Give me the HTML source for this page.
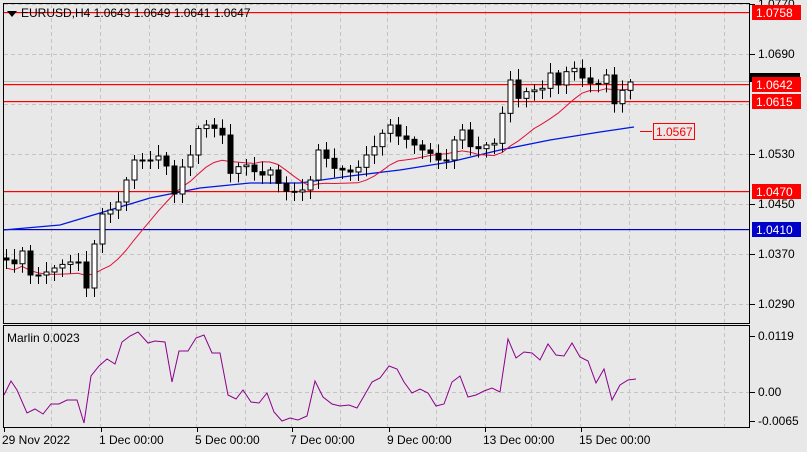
<!DOCTYPE html>
<html><head><meta charset="utf-8"><style>
body{margin:0;background:#e8e8e8;width:807px;height:452px;overflow:hidden;font-family:"Liberation Sans",sans-serif}
svg{position:absolute;left:0;top:0}
text{font-family:"Liberation Sans",sans-serif;font-size:12px}
</style></head><body>
<svg id="s" width="807" height="452" xmlns="http://www.w3.org/2000/svg">
<rect width="807" height="452" fill="#e8e8e8"/>
<g id="grid" stroke="#c4c4c4" stroke-dasharray="4,3" stroke-width="1"></g>
<line x1="3" y1="81.5" x2="750" y2="81.5" stroke="#c0c0c0"/>
<g id="hl"></g>
<polyline id="blue" fill="none" stroke="#0018e0" stroke-width="1.3" points="3,230 60,225 100,213 150,198 200,188 250,183 300,183 350,176 400,170 450,162 500,150 550,140 600,132 634,127"/>
<polyline id="red" fill="none" stroke="#e0103a" stroke-width="1"/>
<g id="c"></g>
<polyline id="ind" fill="none" stroke="#8b008b" stroke-width="1"/>
<rect x="3.5" y="3.5" width="746" height="320" fill="none" stroke="#000"/>
<rect x="3.5" y="325.5" width="746" height="102" fill="none" stroke="#000"/>
<g id="ax"></g>
<polygon points="7,11 17,11 12,17" fill="#000"/>
<text x="21" y="17" font-size="12">EURUSD,H4  1.0643 1.0649 1.0641 1.0647</text>
<text x="7" y="342" font-size="12">Marlin 0.0023</text>
<line x1="640" y1="131.5" x2="652" y2="131.5" stroke="#f00"/>
<rect x="653.5" y="123.5" width="41" height="16" fill="#e8e8e8" stroke="#f00"/>
<text x="656" y="136" fill="#f00" font-size="12">1.0567</text>
</svg>
<script>
var N="http://www.w3.org/2000/svg",S=document.getElementById('s');
function el(p,t,a,tx){var e=document.createElementNS(N,t);for(var k in a)e.setAttribute(k,a[k]);if(tx)e.textContent=tx;document.getElementById(p).appendChild(e);return e;}
var g=[51,100,149,196,245,291,340,387,436,485,531,580,629,675,724];
g.forEach(function(x){el('grid','line',{x1:x+.5,y1:4,x2:x+.5,y2:323});el('grid','line',{x1:x+.5,y1:326,x2:x+.5,y2:427});});
[4,54,104,154,204,254,304].forEach(function(y){el('grid','line',{x1:4,y1:y+.5,x2:749,y2:y+.5});});
el('grid','line',{x1:4,y1:392.5,x2:749,y2:392.5});
[[12,'#ff0000'],[84,'#ff0000'],[101,'#ff0000'],[191,'#ff0000'],[229,'#0000c0']].forEach(function(a){el('hl','rect',{x:4,y:a[0],width:746,height:1.2,fill:a[1]});});
function tick(y,t){el('ax','line',{x1:750,y1:y+.5,x2:755,y2:y+.5,stroke:'#000'});if(t)el('ax','text',{x:758,y:y+4},t);}
tick(4,'1.0770');tick(54,'1.0690');tick(154,'1.0530');tick(204,'1.0450');tick(254,'1.0370');tick(304,'1.0290');
el('ax','rect',{x:750,y:73,width:50,height:9,fill:'#000'});
[[12,'1.0758','#f00'],[84,'1.0642','#f00'],[101,'1.0615','#f00'],[191,'1.0470','#f00'],[229,'1.0410','#0000c8']].forEach(function(a){el('ax','rect',{x:752,y:a[0]-7,width:49,height:15,fill:a[2]});el('ax','text',{x:756,y:a[0]+5,fill:'#fff'},a[1]);});
tick(336,'0.0119');tick(392,'0.00');tick(421,'-0.0065');
[[2,'29 Nov 2022'],[99,'1 Dec 00:00'],[195,'5 Dec 00:00'],[290,'7 Dec 00:00'],[387,'9 Dec 00:00'],[483,'13 Dec 00:00'],[579,'15 Dec 00:00']].forEach(function(a){el('ax','line',{x1:a[0]+2.5,y1:428,x2:a[0]+2.5,y2:432,stroke:'#000'});el('ax','text',{x:a[0],y:444},a[1]);});
var K=[[6,260],[12,270],[20,245],[30,275],[40,275],[50,270],[60,265],[70,262],[80,262],[85,295],[90,260],[95,240],[100,215],[110,210],[120,200],[126,180],[132,160],[140,160],[150,160],[160,155],[165,160],[170,190],[175,195],[180,175],[185,155],[190,155],[196,130],[203,125],[210,125],[216,130],[222,135],[228,175],[234,170],[240,165],[246,165],[252,170],[258,175],[264,175],[270,170],[276,180],[282,190],[288,192],[294,192],[300,190],[306,190],[312,175],[318,150],[324,155],[330,165],[336,170],[342,170],[348,172],[354,172],[360,165],[366,155],[372,150],[378,140],[384,130],[390,125],[396,135],[402,138],[408,140],[414,145],[420,150],[426,150],[432,155],[438,160],[444,165],[450,150],[456,135],[462,130],[468,145],[474,150],[480,148],[486,145],[492,145],[498,140],[504,100],[510,80],[516,100],[522,95],[528,90],[534,90],[540,95],[546,75],[552,72],[558,85],[564,75],[570,65],[576,70],[582,78],[588,75],[594,100],[600,75],[606,75],[612,108],[618,95],[624,88],[630,82],[636,82]];
function at(x){for(var i=1;i<K.length;i++)if(K[i][0]>=x){var a=K[i-1],b=K[i];return a[1]+(b[1]-a[1])*(x-a[0])/(b[0]-a[0]);}return K[K.length-1][1];}
var prev=258,cl=[],xs=[];
for(var x=6;x<=636;x+=8){var c=at(x),o=prev,hi=Math.min(o,c)-3-((x*7)%9),lo=Math.max(o,c)+3+((x*5)%8);
el('c','line',{x1:x+.5,y1:hi,x2:x+.5,y2:lo,stroke:'#000'});
var t=Math.min(o,c),h=Math.max(Math.abs(o-c),1);
el('c','rect',{x:x-2,y:t,width:5,height:h,fill:c<o?'#fff':'#000',stroke:'#000'});
prev=c;cl.push(c);xs.push(x);}
var pts=[];for(var i=0;i<cl.length;i++){var s=0,n=0;for(var j=Math.max(0,i-10);j<=i;j++){s+=cl[j];n++;}pts.push(xs[i]+','+(s/n+8).toFixed(1));}
document.getElementById('red').setAttribute('points',pts.join(' '));
var I=[[4,395],[11,381],[17,390],[27,413],[35,409],[43,414],[51,404],[59,404],[67,400],[77,400],[84,423],[91,376],[99,366],[107,359],[115,364],[122,342],[130,336],[138,332],[148,343],[155,341],[165,342],[172,382],[179,351],[188,351],[196,338],[204,335],[212,353],[220,353],[228,395],[236,399],[243,390],[251,402],[259,403],[267,393],[274,412],[282,421],[290,418],[298,420],[307,416],[315,381],[323,397],[332,404],[340,406],[349,405],[357,408],[364,396],[372,382],[380,378],[389,366],[397,369],[404,382],[412,393],[420,389],[428,393],[436,406],[444,404],[452,382],[460,376],[468,397],[476,395],[484,391],[492,388],[500,392],[508,339],[516,358],[524,352],[532,353],[540,360],[548,344],[556,355],[564,356],[572,343],[580,357],[588,361],[596,383],[604,369],[612,400],[620,385],[628,380],[636,379]];
document.getElementById('ind').setAttribute('points',I.map(function(p){return p.join(',')}).join(' '));
</script>
</body></html>
